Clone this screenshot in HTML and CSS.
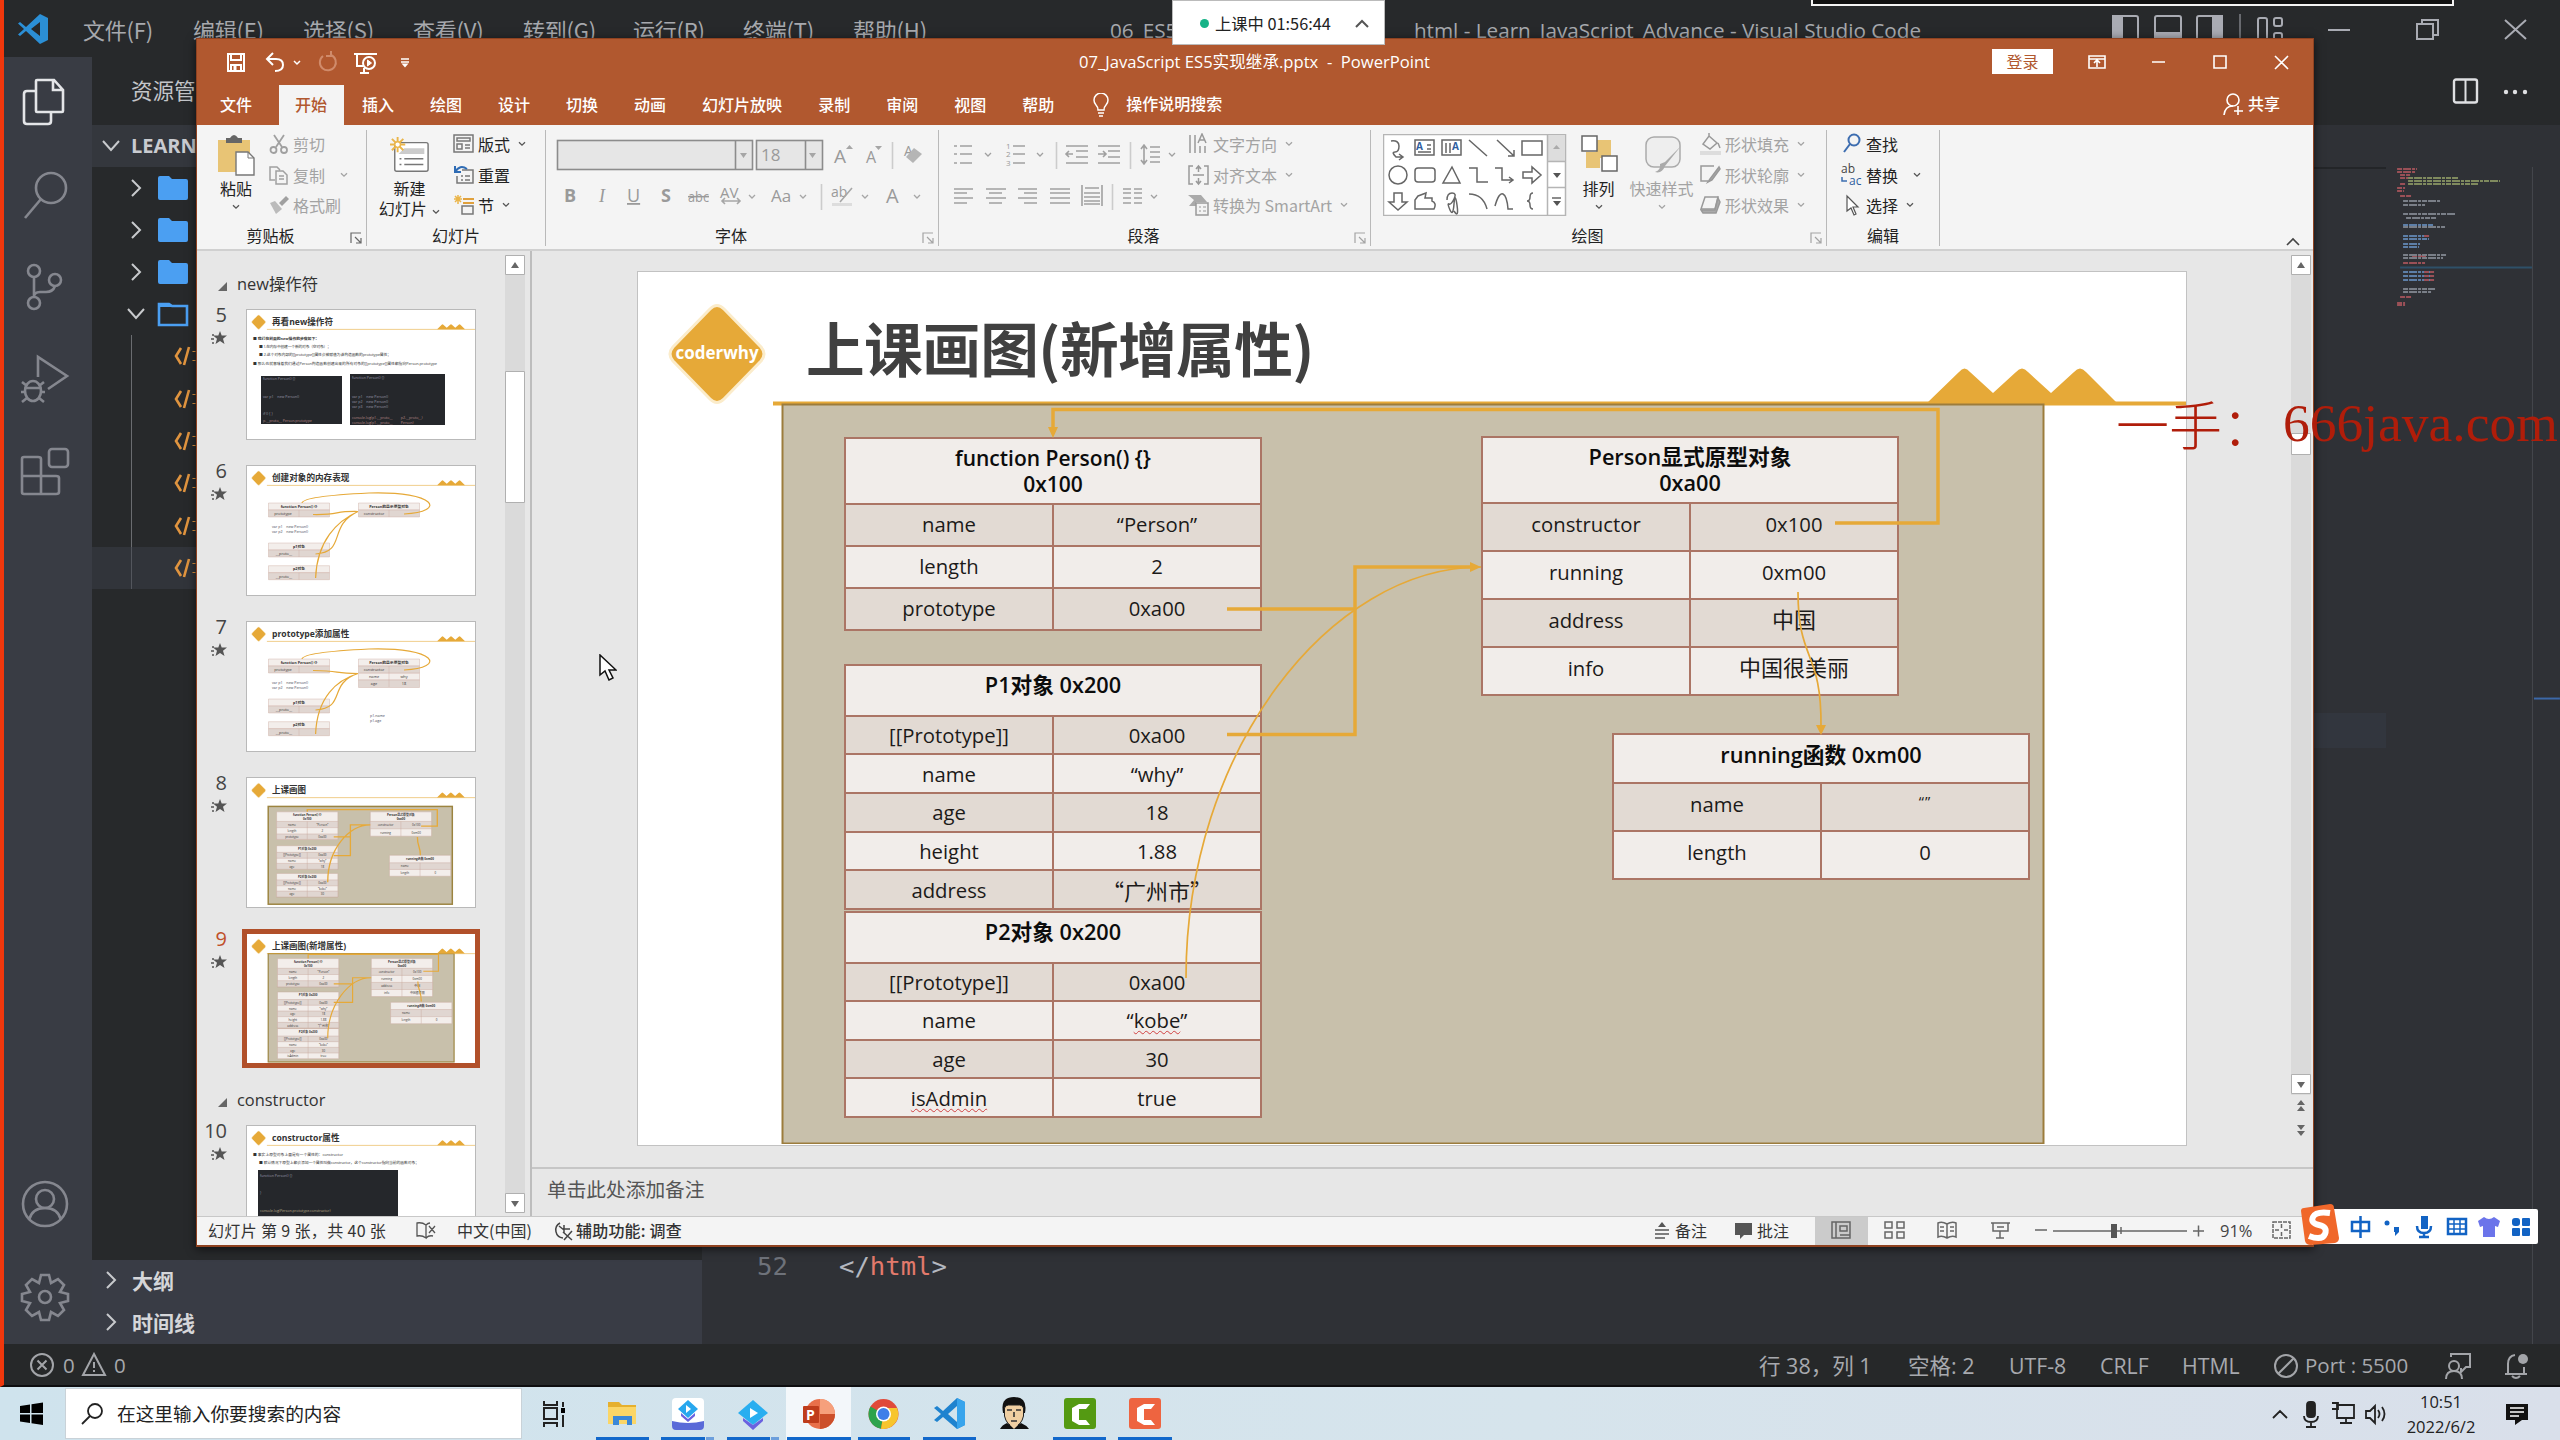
FILE: index.html
```html
<!DOCTYPE html>
<html lang="zh-CN">
<head>
<meta charset="utf-8">
<title>Desktop</title>
<link rel="stylesheet" href="styles.css">
</head>
<body>
<svg class="defs" width="0" height="0">
  <defs>
    <symbol id="chev" viewBox="0 0 8 6"><path d="M1 1.2l3 3 3-3" fill="none" stroke="currentColor" stroke-width="1.3"/></symbol>
    <symbol id="launch" viewBox="0 0 12 12"><path d="M1 11V1h10M5 5l6 6M11 6v5H6" fill="none" stroke="currentColor" stroke-width="1.2"/></symbol>
    <symbol id="code" viewBox="0 0 24 20"><path d="M7 2L2 10l5 8M15 1l-5 18" fill="none" stroke="#e0943f" stroke-width="2.6"/><path d="M20 5v1M20 14v1" stroke="#e0943f" stroke-width="3"/></symbol>
    <symbol id="folder" viewBox="0 0 32 26"><path d="M1 3q0-2 2-2h9l3 3h14q2 0 2 2v17q0 2-2 2H3q-2 0-2-2z" fill="#4b9ff2"/></symbol>
    <symbol id="star" viewBox="0 0 16 14"><path d="M9 0l1.700 4.600H16l-4 3.200 1.500 5.200L9 10l-4.500 3 1.500-5.200-4-3.200h5.300z" fill="#555"/><path d="M1 4h2M0 8h3M1 12h2" stroke="#555" stroke-width="1.300"/></symbol>
    <g id="deco">
      <path d="M773 403.500H2186" stroke="#e6a938" stroke-width="4"/>
      <path d="M1928 402l31-30q5.500-7 11 0l23 21 23-21q6-7 12 0l23 21 23-21q6-7 12 0l31 31z" fill="#e6a938"/>
      <path d="M710 309q7-7 14 0l37 38q6 7 0 14l-37 38q-7 7-14 0l-37-38q-6-7 0-14z" fill="#e6a938" stroke="#fbeccb" stroke-width="3"/>
    </g>
    <g id="links" fill="none" stroke="#e6a938" stroke-width="3.500">
      <path d="M1835 523H1938V409.500H1053V430M1227 609H1355M1227 734.500H1355V567H1474"/>
      <path d="M1186 978C1186 750 1330 567 1481 567" stroke-width="1.700"/>
      <path d="M1798 592C1798 663 1822 650 1821 728" stroke-width="1.700"/>
      <path d="M1053 438l-5-11h10zM1481 567l-11-5v10zM1821 735l-5-10h10z" fill="#e6a938" stroke="none"/>
    </g>
  </defs>
</svg>

<main class="desktop">
<section class="vscode">
  <header class="vs-title">
    <svg class="vs-logo" viewBox="0 0 32 32"><path d="M23 1l8 4v22l-8 4L9 18l-6 5-2-1.500L7 16 1 10.500 3 9l6 5zM23 9l-9 7 9 7z" fill="#2b8fd6" fill-rule="evenodd"/></svg>
    <nav class="vs-menu"><span>文件(F)</span><span>编辑(E)</span><span>选择(S)</span><span>查看(V)</span><span>转到(G)</span><span>运行(R)</span><span>终端(T)</span><span>帮助(H)</span></nav>
    <span class="vs-name-a">06_ES5</span><span class="vs-name-b">html - Learn_JavaScript_Advance - Visual Studio Code</span>
    <svg class="vs-ctl" viewBox="2100 0 460 57" fill="none" stroke="#a9abb3" stroke-width="2">
      <rect x="2113" y="16" width="25" height="26" rx="2"/><path d="M2113 16h9v26h-9z" fill="#a9abb3"/>
      <rect x="2155" y="16" width="26" height="26" rx="2"/><path d="M2155 33h26v9h-26z" fill="#a9abb3"/>
      <rect x="2197" y="16" width="25" height="26" rx="2"/><path d="M2213 16h9v26h-9z" fill="#a9abb3"/>
      <path d="M2240 14v30" stroke-width="1"/>
      <rect x="2258" y="18" width="9" height="24" rx="2"/><rect x="2274" y="18" width="8" height="8" rx="2"/><rect x="2274" y="33" width="8" height="8" rx="2"/>
      <path d="M2328 30h22M2505 20l21 19M2526 20l-21 19"/><path d="M2417 24h16v15h-16zM2422 24v-4h16v15h-5"/>
    </svg>
  </header>
  <div class="vs-body">
    <aside class="activity">
      <svg viewBox="6 57 89 1287" fill="none" stroke="#85878f" stroke-width="2.600">
        <g stroke="#e4e5e8"><path d="M39 80h17l9 10v21q0 1-1 1H39q-1 0-1-1V81q0-1 1-1zM55 80v10h10"/><path d="M38 91h-9q-3 0-3 3v27q0 3 3 3h21q3 0 3-3v-8"/></g>
        <circle cx="53" cy="188" r="15"/><path d="M43 199L27 218"/>
        <circle cx="36" cy="271" r="6"/><circle cx="57" cy="280" r="6"/><circle cx="36" cy="303" r="6"/><path d="M36 277v20M57 286q-2 6-9 6h-6q-6 0-6 5"/>
        <path d="M40 377V357l29 19-19 13"/><ellipse cx="35" cy="391" rx="8" ry="10"/><path d="M27 388h16M24 382l5 4M46 382l-5 4M23 392h5M42 392h5M24 402l5-4M46 402l-5-4"/>
        <path d="M24 459q0-2 2-2h14q3 0 3 2v17h15q3 0 3 2v14q0 2-3 2H26q-2 0-2-2zM24 476h19v18"/><rect x="51" y="449" width="19" height="18" rx="3"/>
        <circle cx="47" cy="1204" r="22"/><circle cx="47" cy="1199" r="9"/><path d="M31 1220q3-12 16-12t16 12"/>
        <circle cx="47" cy="1297" r="6"/><path d="M43 1275h8l2 8 7-4 6 6-4 7 8 2v7l-8 2 4 7-6 6-7-4-2 8h-8l-2-8-7 4-6-6 4-7-8-2v-7l8-2-4-7 6-6 7 4z" />
      </svg>
    </aside>
    <aside class="side">
      <h2>资源管</h2>
      <div class="root"><svg viewBox="0 0 20 12"><path d="M2 1l8 9 8-9"/></svg><b>LEARN</b></div>
      <ul class="tree">
        <li><svg viewBox="0 0 12 20"><path d="M2 2l8 8-8 8"/></svg><svg class="fold"><use href="#folder"/></svg></li>
        <li><svg viewBox="0 0 12 20"><path d="M2 2l8 8-8 8"/></svg><svg class="fold"><use href="#folder"/></svg></li>
        <li><svg viewBox="0 0 12 20"><path d="M2 2l8 8-8 8"/></svg><svg class="fold"><use href="#folder"/></svg></li>
        <li class="open"><svg viewBox="0 0 20 12"><path d="M2 1l8 9 8-9"/></svg><svg class="fold" viewBox="0 0 32 26"><path d="M2 3h10l3 2h15v19H2z" fill="none" stroke="#4b9ff2" stroke-width="2.600"/><path d="M2 3h10l3 3H2z" fill="#4b9ff2"/></svg></li>
      </ul>
      <ul class="files">
        <li><svg><use href="#code"/></svg></li><li><svg><use href="#code"/></svg></li><li><svg><use href="#code"/></svg></li><li><svg><use href="#code"/></svg></li><li><svg><use href="#code"/></svg></li><li class="sel"><svg><use href="#code"/></svg></li>
      </ul>
      <div class="panels">
        <div><svg viewBox="0 0 12 20"><path d="M2 2l8 8-8 8"/></svg><b>大纲</b></div>
        <div><svg viewBox="0 0 12 20"><path d="M2 2l8 8-8 8"/></svg><b>时间线</b></div>
      </div>
    </aside>
    <section class="editor">
      <div class="ed-tabs"><svg viewBox="0 0 80 26"><rect x="2" y="1.500" width="23" height="23" rx="2" fill="none" stroke="#dfe0e3" stroke-width="2.400"/><path d="M13.500 2v22" stroke="#dfe0e3" stroke-width="2"/><g fill="#dfe0e3"><circle cx="54" cy="14" r="2.200"/><circle cx="63" cy="14" r="2.200"/><circle cx="73" cy="14" r="2.200"/></g></svg></div>
      <div class="crumb"></div>
      <div class="ed-body">
        <div class="code-col"><div class="hl"></div><p class="line"><span class="no">52</span><span class="src">&lt;/<i>html</i>&gt;</span></p></div>
        <svg class="minimap" viewBox="2386 166 174 1178">
          <path d="M2532.500 166v1178" stroke="#44474d"/><path d="M2534 698h26" stroke="#3c68a8" stroke-width="2"/><path d="M2400 266.500h132" stroke="#2e5068" stroke-width="2"/>
          <g stroke-width="2" fill="none" stroke-dasharray="5 1 8 1 3 1">
            <path stroke="#9a5057" d="M2397 168h20M2397 171h18M2400 174h10M2400 177h8M2400 183h6M2397 187h8M2397 190h7M2400 195h11M2412 255h14M2400 296h11M2397 302h8M2397 304h8"/>
            <path stroke="#7f8a5e" d="M2408 177h50M2408 180h92M2408 183h70"/>
            <path stroke="#7a7f88" d="M2403 200h38M2403 204h22M2403 213h52M2406 217h30M2403 226h42M2403 254h44M2403 257h40M2403 288h32M2403 291h28"/>
            <path stroke="#5d7fa8" d="M2403 224h30M2403 235h26M2403 238h26M2403 243h17M2403 246h16M2403 271h31M2403 275h31M2403 279h31"/>
            <path stroke="#9a5057" d="M2424 235h6M2424 271h10M2424 275h10M2424 279h10M2403 262h22"/>
          </g>
        </svg>
      </div>
    </section>
  </div>
  <footer class="vs-status">
    <svg class="probs" viewBox="27 1345 80 40" fill="none" stroke="#a3a5a9" stroke-width="2"><circle cx="42" cy="1365" r="11"/><path d="M37.500 1360.500l9 9M46.500 1360.500l-9 9"/></svg><span class="n1">0</span>
    <svg class="warn" viewBox="0 0 26 26" fill="none" stroke="#a3a5a9" stroke-width="2"><path d="M13 2l11 21H2zM13 10v6M13 18v2"/></svg><span class="n2">0</span>
    <span class="s-pos">行 38，列 1</span><span class="s-sp">空格: 2</span><span class="s-utf">UTF-8</span><span class="s-crlf">CRLF</span><span class="s-html">HTML</span>
    <svg class="ban" viewBox="0 0 26 26" fill="none" stroke="#a3a5a9" stroke-width="2"><circle cx="13" cy="13" r="11"/><path d="M5 21L21 5"/></svg><span class="s-port">Port : 5500</span>
    <svg class="fb" viewBox="2445 1350 90 32" fill="none" stroke="#a3a5a9" stroke-width="2"><circle cx="2456" cy="1366" r="5"/><path d="M2448 1379q0-8 8-8t8 8M2453 1357v-3h19v13h-4l-5 5v-4"/><path d="M2507 1374h22M2510 1373v-9q0-8 7-9M2526 1373v-6M2514 1376q4 4 8 0"/><circle cx="2525" cy="1359" r="5" fill="#a3a5a9" stroke="none"/></svg>
  </footer>
</section>

<section class="ppt">
  <header class="p-title">
    <svg class="qat" viewBox="220 48 200 30" fill="none" stroke="#fff" stroke-width="2">
      <path d="M228 54h16v17h-16zM231 54v6h10v-6M231 71v-6h10v6"/><path d="M235 66v5" stroke-width="3"/>
      <path d="M273 53l-6 6 6 6M267 59h9q7 0 7 6t-8 6"/><path d="M294 61l3 3 3-3" stroke-width="1.500"/>
      <path d="M331 55a8 8 0 1 1-8 1M331 51v5h-5" stroke="#d08b6b"/>
      <path d="M354 54h23M357 54v12h6M364 68v4M360 73h9"/><circle cx="369" cy="63" r="6"/><path d="M367.500 60l4 3-4 3z" fill="#fff" stroke-width="1"/>
      <path d="M401 59h8M401 62h8" stroke-width="1.500"/><path d="M401.500 63.500h7l-3.500 4z" fill="#fff" stroke="none"/>
    </svg>
    <span class="p-name">07_JavaScript ES5实现继承.pptx&nbsp; -&nbsp; PowerPoint</span>
    <span class="login">登录</span>
    <svg class="p-ctl" viewBox="2080 40 220 40" fill="none" stroke="#fff" stroke-width="1.600"><path d="M2089 54h16v12h-16zM2089 57h16M2097 65v-6M2094 61l3-3 3 3M2152 60h13M2214 54h12v12h-12zM2275 54l13 13M2288 54l-13 13"/></svg>
  </header>
  <nav class="p-tabs">
    <span class="file">文件</span><span class="on">开始</span><span>插入</span><span>绘图</span><span>设计</span><span>切换</span><span>动画</span><span>幻灯片放映</span><span>录制</span><span>审阅</span><span>视图</span><span>帮助</span>
    <svg class="bulb" viewBox="0 0 18 24" fill="none" stroke="#fff" stroke-width="1.500"><path d="M6 17q0-3-2-5a7 7 0 1 1 10 0q-2 2-2 5zM6 20h6M7 23h4"/></svg><em>操作说明搜索</em>
    <svg class="person" viewBox="0 0 22 24" fill="none" stroke="#fff" stroke-width="1.600"><circle cx="10" cy="7" r="6"/><path d="M1 22q1-9 9-9M15 13v9M11 18h9"/></svg><em>共享</em>
  </nav>
  <div class="ribbon">
    <div class="grp g-clip">
      <div class="body">
        <div class="big"><svg viewBox="0 0 40 42"><path d="M2 6h32v32H2z" fill="#e8c475"/><path d="M10 9V4h4q4-6 8 0h4v5z" fill="#666"/><path d="M20 18h12l6 6v17H20z" fill="#fff" stroke="#777" stroke-width="1.400"/><path d="M32 18v6h6" fill="none" stroke="#777"/></svg><span>粘贴</span><svg class="cv"><use href="#chev"/></svg></div>
        <div class="col dim">
          <p><svg viewBox="0 0 22 22" fill="none" stroke="#a0a0a0" stroke-width="1.800"><path d="M6 2l8 12M16 2L8 14"/><circle cx="5.500" cy="17" r="3"/><circle cx="16" cy="17" r="3"/></svg>剪切</p>
          <p><svg viewBox="0 0 22 22" fill="none" stroke="#a0a0a0" stroke-width="1.500"><path d="M7 16H2V3h7l3 3M8 7h7l4 4v9H8zM11 12h5M11 15h5"/></svg>复制<svg class="cv far"><use href="#chev"/></svg></p>
          <p><svg viewBox="0 0 22 22"><path d="M18 2l3 3-7 7-3-3z" fill="#a0a0a0"/><path d="M2 9l5-2 7 8-6 5z" fill="#bbb"/></svg>格式刷</p>
        </div>
      </div>
      <footer class="wl">剪贴板<svg class="la"><use href="#launch"/></svg></footer>
    </div>
    <div class="grp g-slide">
      <div class="body">
        <div class="big"><svg viewBox="0 0 42 38" fill="none" stroke="#777" stroke-width="1.500"><rect x="5" y="6" width="35" height="30" rx="2" fill="#fff"/><path d="M15 12h21v6H9" stroke="none" fill="#ccc"/><path d="M10 23h2M15 23h20M10 29h2M15 29h20"/><path d="M8 0v16M0 8h16M2 2l12 12M14 2L2 14" stroke="#eab54a" stroke-width="2"/><circle cx="8" cy="8" r="3" fill="#fff" stroke="#eab54a"/></svg><span>新建<br>幻灯片 <svg class="cv"><use href="#chev"/></svg></span></div>
        <div class="col">
          <p><svg viewBox="0 0 22 22" fill="none" stroke="#777" stroke-width="1.500"><path d="M1 2h19v17H1zM4 5h13v3H4zM4 11h5v5H4zM12 12h5M12 15h5"/></svg>版式<svg class="cv"><use href="#chev"/></svg></p>
          <p><svg viewBox="0 0 22 22" fill="none" stroke="#777" stroke-width="1.500"><path d="M9 6h11v13H4v-7M8 12h2M12 12h5M8 16h2M12 16h5"/><path d="M2 2v6h6M2 8q5-8 12-3" stroke="#2f6cb5" stroke-width="2"/></svg>重置</p>
          <p><svg viewBox="0 0 22 22" fill="none" stroke="#777" stroke-width="1.500"><path d="M9 12h11v8H9z"/><path d="M10 5h11M10 9h11" stroke="#e0a03c" stroke-width="2"/><path d="M5 1v9M1 5h8M2 2l6 6M8 2L2 8" stroke="#eab54a"/></svg>节<svg class="cv"><use href="#chev"/></svg></p>
        </div>
      </div>
      <footer>幻灯片</footer>
    </div>
    <div class="grp g-font">
      <svg class="tools" viewBox="546 126 392 94" fill="none" stroke="#a6a6a6" stroke-width="1.600">
        <rect x="557.500" y="140.500" width="195" height="29" fill="#e6e6e6" stroke="#8c8c8c"/><path d="M735.500 140v30" stroke="#8c8c8c"/><rect x="756.500" y="140.500" width="66" height="29" fill="#e6e6e6" stroke="#8c8c8c"/><path d="M805.500 140v30" stroke="#8c8c8c"/>
        <path d="M740 153h7l-3.500 5zM809 153h7l-3.500 5zM846 149l3.500-4 3.500 4zM875 146h7l-3.500 4z" fill="#a6a6a6" stroke="none"/>
        <path d="M892.500 142v27M821.500 184v26" stroke="#ccc"/>
        <g fill="#9a9a9a" stroke="none" font-size="17"><text x="761" y="161">18</text><text x="834" y="163" font-size="19">A</text><text x="866" y="163" font-size="16">A</text><text x="904" y="156" font-size="14">A</text>
        <g font-size="18"><text x="564" y="202" font-weight="700">B</text><text x="599" y="202" font-style="italic" style="font-family:'Liberation Serif',serif">I</text><text x="627" y="202" text-decoration="underline">U</text><text x="661" y="202" font-weight="700">S</text><text x="688" y="202" font-size="15" text-decoration="line-through" textLength="21" lengthAdjust="spacingAndGlyphs">abc</text><text x="720" y="198" font-size="15">AV</text><text x="771" y="202" font-size="17">Aa</text><text x="831" y="197" font-size="14">ab</text><text x="886" y="203" font-size="20">A</text></g></g>
        <path d="M722 201h18M725 198l-3 3 3 3M737 198l3 3-3 3M840 202l12-14"/><path d="M832 203h20v3h-20z" fill="#ddd" stroke="none"/><path d="M914 148l8 6-9 9-7-6z" fill="#b5b5b5" stroke="none"/>
        <path d="M749 195l3 3 3-3M800 195l3 3 3-3M862 195l3 3 3-3M914 195l3 3 3-3" stroke-width="1.300"/>
      </svg>
      <footer class="wl">字体<svg class="la dim"><use href="#launch"/></svg></footer>
    </div>
    <div class="grp g-para">
      <div class="body">
      <svg class="tools" viewBox="939 126 245 94" fill="none" stroke="#a0a0a0" stroke-width="1.600">
        <path d="M954 146h3M960 146h12M954 154h3M960 154h12M954 163h3M960 163h12M1013 146h12M1013 154h12M1013 163h12"/>
        <g fill="#9a9a9a" stroke="none" font-size="8"><text x="1006" y="149">1</text><text x="1006" y="157">2</text><text x="1006" y="166">3</text></g>
        <path d="M1056.500 142v27M1130.500 142v27M1112.500 184v26" stroke="#ccc"/>
        <path d="M1066 146h22M1076 151h12M1076 157h12M1066 163h22M1073 154h-7M1069 151l-3 3 3 3M1098 146h22M1108 151h12M1108 157h12M1098 163h22M1098 154h8M1103 151l3 3-3 3M1144 146v17M1141 149l3-4 3 4M1141 160l3 4 3-4M1150 147h10M1150 152h10M1150 157h10M1150 162h10"/>
        <path d="M954 189h19M954 193h13M954 198h19M954 203h13M986 189h20M989 193h13M986 198h20M989 203h13M1018 189h19M1024 193h13M1018 198h19M1024 203h13M1050 189h20M1050 193h20M1050 198h20M1050 203h20M1084 193h16M1084 197h16M1084 201h16M1084 204h16M1082 185v21M1102 185v21M1085 188h14M1123 189h8M1134 189h8M1123 193h8M1134 193h8M1123 198h8M1134 198h8M1123 203h8M1134 203h8"/>
        <path d="M985 153l3 3 3-3M1037 153l3 3 3-3M1169 153l3 3 3-3M1151 195l3 3 3-3" stroke-width="1.300"/>
      </svg>
      <div class="col dim">
        <p><svg viewBox="0 0 22 22" fill="none" stroke="#999" stroke-width="1.500"><path d="M2 2v18M7 2v18M12 13v7M17 13v7M10 10l4-9 4 9M11 7h6"/></svg>文字方向<svg class="cv"><use href="#chev"/></svg></p>
        <p><svg viewBox="0 0 22 22" fill="none" stroke="#999" stroke-width="1.500"><path d="M5 2H1v18h4M16 2h4v18h-4M10.500 2v6M8 5l2.500-3L13 5M10.500 20v-6M8 17l2.500 3 2.500-3M5 11h11"/></svg>对齐文本<svg class="cv"><use href="#chev"/></svg></p>
        <p><svg viewBox="0 0 22 22"><path d="M0 1h13l6 7H8v4H1l5-6z" fill="#aaa"/><path d="M8 9h12v12H8z" fill="#f3f3f3" stroke="#999" stroke-width="1.500"/><path d="M11 13h2M15 13h3M11 17h2M15 17h3" stroke="#999"/></svg>转换为 SmartArt<svg class="cv"><use href="#chev"/></svg></p>
      </div>
      </div>
      <footer class="wl">段落<svg class="la dim"><use href="#launch"/></svg></footer>
    </div>
    <div class="grp g-draw">
      <div class="body">
      <svg class="gal" viewBox="1383 134 184 82" fill="none" stroke="#666" stroke-width="1.500">
        <rect x="1383.500" y="134.500" width="182" height="81" fill="#fff" stroke="#b5b5b5"/><path d="M1548 135h17v26h-17z" fill="#ddd" stroke="none"/><path d="M1547.500 135v80M1548 161.500h18M1548 187.500h18" stroke="#b5b5b5"/>
        <path d="M1553 149l3.500-4 3.500 4z" fill="#aaa" stroke="none"/><path d="M1553 173h8l-4 5zM1553 201h8l-4 5z" fill="#555" stroke="none"/><path d="M1552 198h9"/>
        <path d="M1391 141q8-1 8 5t-4 6 1 5h6M1399 154l4 3-4 3"/><path d="M1415 140h19v15h-19zM1442 140h19v15h-19zM1427 145h4M1427 149h4M1418 152h13M1446 143v10M1450 143v10"/><text x="1416" y="150" font-size="10" fill="#2f5f9f" stroke="none" font-weight="700">A</text><text x="1452" y="150" font-size="10" fill="#2f5f9f" stroke="none" font-weight="700">A</text>
        <path d="M1469 140l18 16M1497 140l17 16M1514 150v6h-6M1522 141h20v14h-20z"/><circle cx="1398" cy="175" r="9"/><rect x="1415" y="168" width="20" height="14" rx="3"/><path d="M1452 167l8 16h-17zM1469 168h8v14h11M1495 168h7v12h10M1509 177l4 3-4 3M1523 172h9v-5l9 8-9 8v-5h-9z"/>
        <path d="M1394 193h8v9h5l-9 8-9-8h5zM1418 196l8-3-1 5h7v3q5 2 2 8h-19v-9zM1447 200q0-7 5-7t2 6-5 5 1 6 4-6 3 1-3 6M1469 194q14 0 18 15M1495 206q4-14 8-12t5 15h5M1533 193q-3 0-3 4t-3 4q3 0 3 4t3 4"/>
      </svg>
      <div class="big"><svg viewBox="0 0 40 42"><path d="M16 6h15v18H16z" fill="#e8c475"/><path d="M6 18h14v16H6z" fill="#e8c475"/><path d="M2 2h15v15H2zM22 22h15v15H22z" fill="#fff" stroke="#666" stroke-width="1.500"/></svg><span>排列</span><svg class="cv"><use href="#chev"/></svg></div>
      <div class="big dim q"><svg viewBox="0 0 40 42"><rect x="3" y="3" width="34" height="30" rx="8" fill="#eee" stroke="#aaa" stroke-width="1.500"/><path d="M38 12L22 32q-3 8-10 6 6-2 5-8l5-2z" fill="#aaa"/></svg><span>快速样式</span><svg class="cv"><use href="#chev"/></svg></div>
      <div class="col dim">
        <p><svg viewBox="0 0 22 22" fill="none" stroke="#999" stroke-width="1.500"><path d="M9 3l8 7-7 6-7-5zM9 3V0M18 10l2 5"/><path d="M0 18h21v4H0z" fill="#ddd" stroke="none"/></svg>形状填充<svg class="cv"><use href="#chev"/></svg></p>
        <p><svg viewBox="0 0 22 22" fill="none" stroke="#999" stroke-width="1.500"><path d="M14 2H1v15h7"/><path d="M19 3l-9 12-2 3 4-2 8-11z" fill="#aaa"/></svg>形状轮廓<svg class="cv"><use href="#chev"/></svg></p>
        <p><svg viewBox="0 0 22 22" fill="none" stroke="#999" stroke-width="1.500"><path d="M5 3h13l-3 12H1z"/><path d="M18 4l2 4-4 11H3l-2-3h14z" fill="#aaa"/></svg>形状效果<svg class="cv"><use href="#chev"/></svg></p>
      </div>
      </div>
      <footer class="wl">绘图<svg class="la dim"><use href="#launch"/></svg></footer>
    </div>
    <div class="grp g-edit">
      <div class="body"><div class="col">
        <p><svg viewBox="0 0 22 22" fill="none" stroke="#3d6db0" stroke-width="2"><circle cx="13" cy="7" r="5.500"/><path d="M9 11l-6 8"/></svg>查找</p>
        <p><svg class="rep" viewBox="0 0 22 26"><text x="0" y="11" font-size="12" fill="#444">ab</text><text x="8" y="23" font-size="12" fill="#2f5f9f">ac</text><path d="M1 15v4h5" fill="none" stroke="#3d6db0" stroke-width="1.500"/></svg>替换<svg class="cv mid"><use href="#chev"/></svg></p>
        <p><svg viewBox="0 0 22 22"><path d="M6 2v15l4-3 3 7 2-1-3-7h5z" fill="#fff" stroke="#555" stroke-width="1.200"/></svg>选择<svg class="cv"><use href="#chev"/></svg></p>
      </div></div>
      <footer>编辑</footer>
    </div>
    <svg class="collapse" viewBox="0 0 16 10"><path d="M2 8l6-6 6 6" fill="none" stroke="#444" stroke-width="1.600"/></svg>
  </div>

  <div class="p-main">
    <aside class="nav">
      <div class="list">
      <h3><i></i>new操作符</h3>
      <div class="th"><div class="num">5<svg><use href="#star"/></svg></div>
        <svg class="pic" viewBox="0 0 228 129"><g transform="scale(.1474) translate(-638 -272)"><use href="#deco"/></g><text class="tt" x="25" y="14.500">再看new操作符</text>
          <g class="tx"><text x="6" y="30" font-weight="700" textLength="66">■ 我们在前面的new操作的步骤如下：</text><text x="12" y="38" textLength="72">■ 1.在内存中创建一个新的对象（空对象）；</text><text x="12" y="46" textLength="132">■ 2.这个对象内部的[[prototype]]属性会被赋值为该构造函数的prototype属性；</text><text x="6" y="55" textLength="184" lengthAdjust="spacingAndGlyphs">■ 那么也就意味着我们通过Person构造函数创建出来的所有对象的[[prototype]]属性都指向Person.prototype</text></g>
          <path d="M14 66h81v48H14zM103 64h95v51h-95z" fill="#25272b"/>
          <g class="mono"><text x="16" y="70">function Person() {}</text><text x="16" y="88">var p1 = new Person()</text><text x="16" y="105">if () { }</text><text x="16" y="112" fill="#b88">p.__proto__  Person.prototype</text><text x="105" y="69">function Person() {}</text><text x="105" y="88">var p1 = new Person()</text><text x="105" y="93">var p2 = new Person()</text><text x="105" y="98">var p3 = new Person()</text><text x="105" y="109" fill="#b88">console.log(p1.__proto__ === p2.__proto__)</text><text x="105" y="114" fill="#b88">console.log(p1.__proto__ === Person)</text></g>
        </svg></div>
      <div class="th"><div class="num">6<svg><use href="#star"/></svg></div>
        <svg class="pic" viewBox="0 0 228 129"><g transform="scale(.1474) translate(-638 -272)"><use href="#deco"/></g><text class="tt" x="25" y="14.500">创建对象的内存表现</text>
          <g class="mini"><path class="h" d="M21.500 37h61v7h-61zM111.500 37h61v7h-61zM21.500 77h61v7h-61zM21.500 99.700h61v7h-61z"/><path class="r" d="M21.500 44h61v7h-61zM111.500 44h61v7h-61zM21.500 84h61v7h-61zM21.500 106.700h61v7h-61zM52 44v7M142 44v7M52 84v7M52 106.700v7"/></g>
          <g class="tx mc"><text x="52" y="42" font-weight="700">function Person() {}</text><text x="142" y="42" font-weight="700">Person的显示原型对象</text><text x="36" y="49">prototype</text><text x="127" y="49">constructor</text><text x="52" y="82" font-weight="700">p1对象</text><text x="52" y="104" font-weight="700">p2对象</text><text x="37" y="89">__proto__</text><text x="37" y="112">__proto__</text></g>
          <g class="mono dk"><text x="25" y="62">var p1 = new Person()</text><text x="25" y="67">var p2 = new Person()</text></g>
          <path class="arc" d="M157 48C200 46 190 25 122 27C80 29 56 32 55 37M66 48.500C95 49 85 45 111 45.500M68.500 88C100 86 80 60 111 45.500M68.600 112C70 75 90 55 111 45.500"/>
        </svg></div>
      <div class="th"><div class="num">7<svg><use href="#star"/></svg></div>
        <svg class="pic" viewBox="0 0 228 129"><g transform="scale(.1474) translate(-638 -272)"><use href="#deco"/></g><text class="tt" x="25" y="14.500">prototype添加属性</text>
          <g class="mini"><path class="h" d="M21.500 37h61v7h-61zM111.500 37h61v7h-61zM21.500 77h61v7h-61zM21.500 99.700h61v7h-61zM111.500 51h61v7h-61z"/><path class="r" d="M21.500 44h61v7h-61zM111.500 44h61v7h-61zM111.500 58h61v7.500h-61zM21.500 84h61v7h-61zM21.500 106.700h61v7h-61zM52 44v7M142 44v21M52 84v7M52 106.700v7"/></g>
          <g class="tx mc"><text x="52" y="42" font-weight="700">function Person() {}</text><text x="142" y="42" font-weight="700">Person的显示原型对象</text><text x="36" y="49">prototype</text><text x="127" y="49">constructor</text><text x="127" y="56">name</text><text x="157" y="56">why</text><text x="127" y="63">age</text><text x="157" y="63">18</text><text x="52" y="82" font-weight="700">p1对象</text><text x="52" y="104" font-weight="700">p2对象</text><text x="37" y="89">__proto__</text><text x="37" y="112">__proto__</text></g>
          <g class="mono dk"><text x="25" y="62">var p1 = new Person()</text><text x="25" y="67">var p2 = new Person()</text><text x="123" y="95">p1.name</text><text x="123" y="100">p1.age</text></g>
          <path class="arc" d="M157 48C200 46 190 25 122 27C80 29 56 32 55 37M66 48.500C95 49 85 51 111 51.500M68.500 88C100 86 80 62 111 51.500M68.600 112C70 75 90 58 111 51.500"/>
        </svg></div>
      <div class="th"><div class="num">8<svg><use href="#star"/></svg></div>
        <svg class="pic" viewBox="638 272 1548 872"><use href="#deco"/><text class="tb" x="808" y="370">上课画图</text>
          <rect x="782" y="463" width="1250" height="664" fill="#c8c0ab" stroke="#9c8440" stroke-width="10"/>
          <g class="mt"><path class="h" d="M839 500h416v187H839zM839 730h416v160H839zM839 918h416v160H839zM1475 500h416v165h-416zM1605 795h416v142h-416z"/><path class="r" d="M839 565h416v42H839zM839 650h416v37H839zM839 775h416v40H839zM839 850h416v40H839zM839 962h416v40H839zM839 1038h416v40H839zM1475 565h416v50h-416zM1605 846h416v45h-416zM1047 565v122M1047 775v115M1047 962v116M1683 565v100M1813 846v91"/>
          <text x="1047" y="527" class="b">function Person() {}</text><text x="1047" y="553" class="b">0x100</text><text x="943" y="594">name</text><text x="1150" y="594">“Person”</text><text x="943" y="636">length</text><text x="1150" y="636">2</text><text x="943" y="676">prototype</text><text x="1150" y="676">0xa00</text><text x="1047" y="760" class="b">P1对象 0x200</text><text x="943" y="802">[[Prototype]]</text><text x="1150" y="802">0xa00</text><text x="943" y="840">name</text><text x="1150" y="840">“why”</text><text x="943" y="878">age</text><text x="1150" y="878">18</text><text x="1047" y="948" class="b">P2对象 0x200</text><text x="943" y="990">[[Prototype]]</text><text x="1150" y="990">0xa00</text><text x="943" y="1028">name</text><text x="1150" y="1028">“kobe”</text><text x="943" y="1066">age</text><text x="1150" y="1066">30</text><text x="1683" y="527" class="b">Person显式原型对象</text><text x="1683" y="553" class="b">0xa00</text><text x="1579" y="597">constructor</text><text x="1787" y="597">0x100</text><text x="1579" y="648">running</text><text x="1787" y="648">0xm00</text><text x="1813" y="828" class="b">running函数 0xm00</text><text x="1709" y="875">name</text><text x="1709" y="920">length</text><text x="1917" y="920">0</text></g>
          <path d="M1820 597H1930V485H1047V500M1227 670H1340M1227 797H1340V588H1475M1186 978C1186 750 1330 590 1475 588M1795 670C1795 740 1815 730 1815 795" fill="none" stroke="#e6a938" stroke-width="9"/>
        </svg></div>
      <div class="th cur"><div class="num">9<svg><use href="#star"/></svg></div>
        <svg class="pic" viewBox="638 272 1548 872"><rect x="782" y="403" width="1262" height="736" fill="#c8c0ab" stroke="#9c8440" stroke-width="8"/><use href="#deco"/><text class="tb" x="808" y="370">上课画图(新增属性)</text>
          <g class="mt"><path class="h" d="M845 437h416v192H845zM845 664h416v244H845zM845 912h416v205H845zM1482 437h416v258h-416zM1613 734h416v145h-416z"/><path class="r" d="M845 503h416v42H845zM845 587h416v42H845zM845 715h416v39H845zM845 793h416v38H845zM845 870h416v38H845zM845 963h416v38H845zM845 1040h416v38H845zM1482 503h416v48h-416zM1482 599h416v48h-416zM1613 783h416v48h-416zM1053 503v126M1053 715v193M1053 963v154M1690 503v192M1821 783v96"/>
          <text x="1053" y="465" class="b">function Person() {}</text><text x="1053" y="493" class="b">0x100</text><text x="949" y="532">name</text><text x="1157" y="532">“Person”</text><text x="949" y="574">length</text><text x="1157" y="574">2</text><text x="949" y="616">prototype</text><text x="1157" y="616">0xa00</text><text x="1053" y="694" class="b">P1对象 0x200</text><text x="949" y="744">[[Prototype]]</text><text x="1157" y="744">0xa00</text><text x="949" y="783">name</text><text x="1157" y="783">“why”</text><text x="949" y="821">age</text><text x="1157" y="821">18</text><text x="949" y="860">height</text><text x="1157" y="860">1.88</text><text x="949" y="899">address</text><text x="1157" y="899">“广州市”</text><text x="1053" y="940" class="b">P2对象 0x200</text><text x="949" y="990">[[Prototype]]</text><text x="1157" y="990">0xa00</text><text x="949" y="1029">name</text><text x="1157" y="1029">“kobe”</text><text x="949" y="1068">age</text><text x="1157" y="1068">30</text><text x="949" y="1106">isAdmin</text><text x="1157" y="1106">true</text><text x="1690" y="465" class="b">Person显式原型对象</text><text x="1690" y="493" class="b">0xa00</text><text x="1586" y="533">constructor</text><text x="1794" y="533">0x100</text><text x="1586" y="581">running</text><text x="1794" y="581">0xm00</text><text x="1586" y="629">address</text><text x="1794" y="629">中国</text><text x="1586" y="677">info</text><text x="1794" y="677">中国很美丽</text><text x="1821" y="763" class="b">running函数 0xm00</text><text x="1717" y="812">name</text><text x="1717" y="860">length</text><text x="1925" y="860">0</text></g>
          <path d="M1835 523H1938V409H1053V437M1227 609H1355M1227 734H1355V567H1481M1186 978C1186 750 1330 567 1481 567M1798 592C1798 663 1822 650 1821 728" fill="none" stroke="#e6a938" stroke-width="8"/>
        </svg></div>
      <h3><i></i>constructor</h3>
      <div class="th"><div class="num">10<svg><use href="#star"/></svg></div>
        <svg class="pic" viewBox="0 0 228 129"><g transform="scale(.1474) translate(-638 -272)"><use href="#deco"/></g><text class="tt" x="25" y="14.500">constructor属性</text>
          <g class="tx"><text x="6" y="30" textLength="90">■ 事实上原型对象上面是有一个属性的：constructor</text><text x="12" y="38" textLength="160">■ 默认情况下原型上都会添加一个属性叫做constructor，这个constructor指向当前的函数对象；</text></g>
          <path d="M11 44h140v65H11z" fill="#25272b"/><g class="mono"><text x="13" y="51">function Person() {}</text><text x="13" y="68">}</text><text x="13" y="86" fill="#ba8">console.log(Person.prototype.constructor)</text><text x="13" y="95" fill="#b77">console.log(p1.__proto__.constructor)</text><text x="13" y="104" fill="#b77">console.log(p1.__proto__.constructor.name)</text></g>
        </svg></div>
      </div>
      <svg class="bar" viewBox="505 251 20 965"><path d="M505 255h20v957h-20z" fill="#dadada"/><path d="M505.500 255.500h19v19h-19zM505.500 371.500h19v131h-19zM505.500 1193.500h19v19h-19z" fill="#fff" stroke="#b0b0b0"/><path d="M511 268h8l-4-6zM511 1201h8l-4 6z" fill="#666"/></svg>
    </aside>
    <section class="stage">
      <div class="canvas">
        <div class="slide">
          <svg class="art" viewBox="638 272 1548 872"><rect x="782.500" y="403.500" width="1261" height="741" fill="#c8c0ab"/><use href="#deco"/><rect x="782.500" y="404.500" width="1261" height="739" fill="#c8c0ab" stroke="#9c7c3c" stroke-width="2"/></svg>
          <b class="brand">coderwhy</b>
          <h1>上课画图(新增属性)</h1>
          <table class="t t1"><tr><th colspan="2">function Person() {}<br>0x100</th></tr><tr><td>name</td><td>“Person”</td></tr><tr><td>length</td><td>2</td></tr><tr><td>prototype</td><td>0xa00</td></tr></table>
          <table class="t t2"><tr><th colspan="2">P1对象 0x200</th></tr><tr><td>[[Prototype]]</td><td>0xa00</td></tr><tr><td>name</td><td>“why”</td></tr><tr><td>age</td><td>18</td></tr><tr><td>height</td><td>1.88</td></tr><tr><td>address</td><td class="cj">“广州市”</td></tr></table>
          <table class="t t3"><tr><th colspan="2">P2对象 0x200</th></tr><tr><td>[[Prototype]]</td><td>0xa00</td></tr><tr><td>name</td><td>“<u>kobe</u>”</td></tr><tr><td>age</td><td>30</td></tr><tr><td><u>isAdmin</u></td><td>true</td></tr></table>
          <table class="t t4"><tr><th colspan="2">Person显式原型对象<br>0xa00</th></tr><tr><td>constructor</td><td>0x100</td></tr><tr><td>running</td><td>0xm00</td></tr><tr><td>address</td><td class="cj">中国</td></tr><tr><td>info</td><td class="cj">中国很美丽</td></tr></table>
          <table class="t t5"><tr><th colspan="2">running函数 0xm00</th></tr><tr><td>name</td><td class="q">“”</td></tr><tr><td>length</td><td>0</td></tr></table>
          <svg class="art" viewBox="638 272 1548 872"><use href="#links"/></svg>
        </div>
        <svg class="bar" viewBox="2291 251 20 917"><path d="M2291 255h20v840h-20z" fill="#dadada"/><path d="M2291.500 255.500h19v19h-19zM2291.500 433.500h19v21h-19zM2291.500 1074.500h19v19h-19z" fill="#fff" stroke="#b0b0b0"/><path d="M2297 268h8l-4-6zM2297 1082h8l-4 6zM2297 1105h8l-4-5zM2297 1111h8l-4-5zM2297 1125h8l-4 5zM2297 1131h8l-4 5z" fill="#666"/></svg>
      </div>
      <div class="notes">单击此处添加备注</div>
    </section>
  </div>
  <footer class="p-status">
    <span class="a">幻灯片 第 9 张，共 40 张</span>
    <svg class="book" viewBox="0 0 20 18" fill="none" stroke="#555" stroke-width="1.300"><path d="M10 3Q6 0 1 1v13q5-1 9 2V3q2-2 4-2M10 16q3-3 7-2M13 4l6 7M19 4l-6 7"/></svg>
    <span class="b">中文(中国)</span>
    <svg class="acc" viewBox="0 0 22 20" fill="none" stroke="#444" stroke-width="1.500"><path d="M8 2a8 8 0 0 0 3 15M7 5l5 4v4M11 11l9 8M20 10l-8 9M12 4v4h6"/></svg>
    <span class="c">辅助功能: 调查</span>
    <svg class="ni" viewBox="0 0 16 18" fill="none" stroke="#555" stroke-width="1.600"><path d="M1 8h14M1 12h14M1 16h10"/><path d="M4 5h8L8 0z" fill="#555" stroke="none"/></svg><span>备注</span>
    <svg class="ci" viewBox="0 0 19 18"><path d="M1 1h17v12h-8l-4 4v-4H1z" fill="#555"/></svg><span>批注</span>
    <svg class="views" viewBox="1815 1217 480 28" fill="none" stroke="#666" stroke-width="1.500">
      <path d="M1815 1217h53v28h-53z" fill="#cbcbcb" stroke="none"/><path d="M1832 1222h18v16h-18zM1836 1222v16M1840 1226h7v5h-7zM1840 1235h10"/>
      <path d="M1885 1222h7v6h-7zM1897 1222h7v6h-7zM1885 1232h7v6h-7zM1897 1232h7v6h-7z"/><path d="M1947 1224q-5-3-9-1v14q4-2 9 1 5-3 9-1v-14q-4-2-9 1v14M1940 1227h4M1940 1231h4M1950 1227h4M1950 1231h4"/><path d="M1991 1223h19M1993 1223v8h15v-8M2000 1231v7M1996 1238h8M1997 1227h7"/>
      <path d="M2035 1230h12M2053 1231h134M2193 1231h11M2198.500 1225.500v11M2121 1227v7"/><path d="M2111 1224h6v14h-6z" fill="#555" stroke="none"/>
      <text x="2220" y="1236.500" font-size="16.500" fill="#444" stroke="none">91%</text><path d="M2273 1222h17v16h-17zM2281.500 1224v4M2281.500 1232v4M2275 1230h4M2284 1230h4" stroke-dasharray="4 1"/>
    </svg>
  </footer>
</section>

<div class="class-timer"><i></i><span>上课中 01:56:44</span><svg viewBox="0 0 16 10"><path d="M2 8l6-6 6 6" fill="none" stroke="#555" stroke-width="2"/></svg></div>
<div class="frame"></div>
<div class="watermark">一手：<span>666java.com</span></div>
<svg class="cursor" viewBox="0 0 18 27"><path d="M1 1v20l5-4 4 9 4-2-4-8h7z" fill="#fff" stroke="#111" stroke-width="1.500"/></svg>
<div class="ime"><svg viewBox="2298 1202 242 44">
  <path d="M2312 1209h224q2 0 2 2v31q0 2-2 2h-224z" fill="#fff"/>
  <path d="M2301 1211q0-3 3-3l26-4q4 0 4 4l5 30q0 4-4 5l-24 2q-5 0-6-4z" fill="#f0672a"/><path d="M2330 1213q-14-2-17 4t6 8 6 9-16 2" fill="none" stroke="#fff" stroke-width="6"/>
  <g fill="none" stroke="#1263c4" stroke-width="2.500"><path d="M2352 1222h17v9h-17zM2360.500 1216v22"/><path d="M2424 1232v5M2419 1237h10M2417 1226q0 7 7 7t7-7"/><rect x="2448" y="1219" width="18" height="15"/><path d="M2448 1224h18M2448 1229h18M2454 1219v15M2460 1219v15" stroke-width="1.500"/></g>
  <path d="M2421 1216h7v13h-7z" fill="#1263c4"/><circle cx="2387" cy="1223" r="2.500" fill="#1263c4"/><path d="M2394 1227h5v5l-4 4v-4h-1z" fill="#1263c4"/>
  <path d="M2484 1217q5 4 10 0l6 4-2 6-3-1v11h-12v-11l-3 1-2-6z" fill="#6b74ea"/>
  <g fill="#1263c4"><rect x="2512" y="1218" width="8" height="8" rx="3"/><rect x="2522" y="1218" width="8" height="8" rx="1"/><rect x="2512" y="1228" width="8" height="8" rx="1"/><rect x="2522" y="1228" width="8" height="8" rx="1"/></g>
</svg></div>

<footer class="taskbar">
  <svg class="win" viewBox="0 0 24 24"><path d="M0 4l10-1.500V11H0zM11.500 2.300L23 .5V11H11.500zM0 12.500h10V21L0 19.500zM11.500 12.500H23V23l-11.500-1.800z"/></svg>
  <div class="search"><svg viewBox="0 0 24 24" fill="none" stroke="#222" stroke-width="1.800"><circle cx="15" cy="9" r="7"/><path d="M10 14l-8 8"/></svg>在这里输入你要搜索的内容</div>
  <svg class="apps" viewBox="530 1387 660 53">
    <g fill="none" stroke="#222" stroke-width="2"><path d="M544 1408h13v11h-13zM544 1401v4h13v-4M544 1427v-4h13v4M563 1402v5M563 1415v12"/></g><path d="M561 1408h4v5h-4z"/>
    <path d="M786 1387h65v53h-65z" fill="#f3f7fa"/>
    <g fill="#1268cb"><path d="M596 1437h53v3h-53zM661 1437h44v3h-44zM727 1437h43v3h-43zM787 1437h64v3h-64zM858 1437h52v3h-52zM923 1437h53v3h-53zM1053 1437h53v3h-53zM1118 1437h54v3h-54z"/></g><path d="M706 1437h8v3h-8zM771 1437h8v3h-8z" fill="#6d9fdc"/>
    <path d="M608 1402h11l3 3h14v19h-28z" fill="#e6b02e"/><path d="M608 1407h28v17h-28z" fill="#fbd667"/><path d="M613 1425v-9h19v9h-5v-5h-8v5z" fill="#3b88d8"/>
    <rect x="672" y="1398" width="32" height="31" rx="4" fill="#fff"/><path d="M688 1400l10 9-10 9-10-9z" fill="#27a7ee"/><path d="M681 1413l7 6 7-6v3l-7 6-7-6z" fill="#6a62e0"/><path d="M672 1421q16 4 32 0v5q0 4-4 4h-24q-4 0-4-4z" fill="#5a6ad8"/><path d="M686 1405l5 4-5 4z" fill="#fff"/>
    <path d="M753 1400l15 13-15 12-15-12z" fill="#29aef0"/><path d="M743 1418l10 7 10-7v3l-10 9-10-9z" fill="#6a62e0"/><path d="M750 1408l8 5-8 5z" fill="#fff"/>
    <circle cx="820" cy="1414" r="15" fill="#e8704a"/><path d="M820 1399a15 15 0 0 1 15 15h-15z" fill="#f6a07c"/><path d="M820 1429a15 15 0 0 0 15-15h-15z" fill="#cc4f2a"/><rect x="803" y="1406" width="16" height="17" rx="1" fill="#bf3d1b"/><text x="806" y="1420" font-size="14" font-weight="700" fill="#fff">P</text>
    <circle cx="883.500" cy="1414" r="15" fill="#e04a3a"/><path d="M883.500 1414L870.500 1406.500A15 15 0 0 0 881 1428.800z" fill="#2da34c"/><path d="M883.500 1414l-2.500 14.800A15 15 0 0 0 897 1408h-13z" fill="#f7c52d"/><circle cx="883.500" cy="1414" r="7.500" fill="#fff"/><circle cx="883.500" cy="1414" r="6" fill="#3f7fe8"/>
    <path d="M957 1398l8 4v23l-8 4-14-12-6 5-3-2 7-6-7-6 3-2 6 5zM957 1406l-9 8 9 8z" fill="#1f83cf" fill-rule="evenodd"/><path d="M957 1398l8 4v23l-8 4z" fill="#38a4ec"/>
    <path d="M1003 1413q-3-16 11-16t11 16z" fill="#111"/><path d="M1004.500 1408q1-3 4-3h11q3 0 4 3v8q-2 9-9.500 11-7.500-2-9.500-11z" fill="#f0cfa2" stroke="#222"/><path d="M1000 1429q2-4 7-6l7 5 7-5q5 2 8 6z" fill="#111"/><path d="M1010 1425l4 4 4-4z" fill="#f0cfa2"/><path d="M1007 1410h5M1016 1410h5M1014 1412v5M1011 1421h6" stroke="#333" stroke-width="1.600"/>
    <rect x="1064" y="1398" width="32" height="31" rx="3" fill="#549a12"/><rect x="1129" y="1398" width="32" height="31" rx="3" fill="#ee6440"/><path d="M1090 1404h-11l-7 4v13l7 4h11l-4-5h-7v-11h7zM1155 1404h-11l-7 4v13l7 4h11l-4-5h-7v-11h7z" fill="#fff"/>
  </svg>
  <svg class="tray" viewBox="2260 1387 130 53" fill="none" stroke="#222" stroke-width="1.800"><path d="M2273 1418l7-7 7 7M2304 1416q0 6 7 6t7-6M2311 1422v5M2306 1427h10M2337 1405h17v13h-17zM2346 1418v5M2340 1423h12M2332 1403h6v6h-6M2366 1411h4l5-5v17l-5-5h-4zM2378 1410q3 4 0 8M2382 1407q5 7 0 14"/><rect x="2307" y="1402" width="8" height="15" rx="3" fill="#222"/></svg>
  <div class="clock"><span>10:51</span><span>2022/6/2</span></div>
  <svg class="note" viewBox="0 0 24 24"><path d="M1 2h22v16h-6l-7 5v-5H1z" fill="#111"/><path d="M5 6h14M5 10h14M5 14h9" stroke="#fff" stroke-width="1.500"/></svg>
</footer>
</main>
</body>
</html>
```
FILE: styles.css
```css
* { box-sizing: border-box; margin: 0; padding: 0; }
body { width: 2560px; height: 1440px; overflow: hidden; background: #2f3136; font: 16px/1 "Noto Sans CJK SC", sans-serif; }
ul { list-style: none; }
svg { flex: none; display: block; }
svg text { font-family: "Open Sans", "Noto Sans CJK SC", sans-serif; }
.defs { position: absolute; }
.desktop { position: relative; display: flex; flex-direction: column; width: 2560px; height: 1440px; overflow: hidden; }

/* editor window */
.vscode { display: flex; flex-direction: column; height: 1387px; border-left: 4px solid #f0370c; border-bottom: 2px solid #0e0e10; background: #27292b; color: #a7a9ae; font-family: "Open Sans", "Noto Sans CJK SC", sans-serif; }
.vs-title { display: flex; align-items: center; height: 57px; font-size: 20.700px; white-space: nowrap; }
.vs-logo { width: 32px; height: 32px; margin: 0 34px 0 13px; }
.vs-menu { display: flex; width: 1027px; font: 22px/1 "Noto Sans CJK SC", sans-serif; letter-spacing: -.2px; }
.vs-menu span { width: 110px; }
.vs-name-a { width: 262px; padding-top: 4px; }
.vs-name-b { width: 549px; display: flex; justify-content: flex-end; margin-right: 179px; padding-top: 4px; }
.vs-ctl { width: 460px; height: 57px; }
.vs-body { display: flex; flex: 1; min-height: 0; }
.activity { width: 88px; background: #393c44; }
.activity svg { width: 89px; height: 1287px; }
.side { width: 610px; display: flex; flex-direction: column; position: relative; }
.side svg { fill: none; stroke: #c8cacd; stroke-width: 2; }
.side h2 { height: 68px; padding: 21px 0 0 39px; font: 21.500px/24px "Noto Sans CJK SC", sans-serif; color: #c3c5c9; }
.root { height: 42px; display: flex; align-items: center; gap: 10px; padding-left: 9px; background: #34373d; color: #c9cbd0; font-size: 20px; }
.root svg { width: 20px; height: 12px; }
.tree li { display: flex; align-items: center; height: 42px; padding-left: 38px; gap: 15px; }
.tree li > svg:first-child { width: 12px; height: 20px; }
.tree .open { padding-left: 34px; gap: 11px; }
.tree .open > svg:first-child { width: 20px; height: 12px; }
.tree .fold { width: 32px; height: 26px; stroke: none; }
.files { background: linear-gradient(#6a6c70, #6a6c70) 39px 0 / 1px 100% no-repeat; }
.files li { height: 42.400px; display: flex; align-items: center; padding-left: 81px; }
.files .sel { background: #3c404a80; }
.files svg { width: 26px; height: 20px; stroke: none; }
.panels { margin-top: auto; height: 84px; background: #393c45; color: #d5d6d9; }
.panels div { height: 42px; display: flex; align-items: center; gap: 15px; padding: 0 0 2px 13px; font: 21px/1 "Noto Sans CJK SC", sans-serif; }
.panels svg { width: 12px; height: 20px; }
.editor { flex: 1; display: flex; flex-direction: column; background: #2f3136; }
.ed-tabs { height: 68px; background: #27292b; display: flex; justify-content: flex-end; align-items: center; padding-right: 28px; }
.ed-tabs svg { width: 80px; height: 26px; }
.crumb { height: 42px; }
.ed-body { flex: 1; display: flex; justify-content: space-between; }
.code-col { flex: 1; border-top: 2px solid #232528; display: flex; flex-direction: column; justify-content: space-between; }
.hl { height: 35px; margin-top: 544px; background: #32363e; }
.line { display: flex; padding: 0 0 65px 55px; font: 25.600px/26px "DejaVu Sans Mono", monospace; color: #b4b8c0; }
.no { width: 82px; color: #6e727a; }
.src i { font-style: normal; color: #e37a6c; }
.minimap { width: 174px; height: 1177px; }
.vs-status { height: 41px; display: flex; align-items: center; font-size: 20.500px; white-space: nowrap; background: #262829; padding-top: 2px; }
.probs { width: 80px; height: 40px; margin-left: 23px; margin-right: -44px; margin-top: -2px; }
.n1 { width: 18px; } .n2 { width: 1652px; padding-left: 7px; } .warn { width: 26px; height: 26px; margin-top: -2px; }
.s-pos { width: 149px; } .s-sp { width: 101px; } .s-utf { width: 91px; } .s-crlf { width: 82px; } .s-html { width: 91px; } .s-port { width: 138px; }
.s-utf, .s-crlf, .s-html { font-size: 21.300px; }
.s-pos, .s-sp { font-size: 21.500px; }
.ban { width: 26px; height: 26px; margin-right: 6px; }
.fb { width: 90px; height: 32px; }

/* presentation window */
.ppt { position: absolute; left: 196px; top: 38px; width: 2118px; height: 1209px; border: 1px solid #8f4220; border-bottom-width: 2px; background: #e7e7e7; display: flex; flex-direction: column; box-shadow: 0 2px 9px #0009; font-size: 16px; color: #333; }
.p-title { height: 46px; background: #b1582f; color: #fff; display: flex; align-items: center; }
.qat { width: 200px; height: 30px; margin-left: 23px; margin-top: 2px; }
.p-name { width: 1125px; text-align: center; margin: 0 178px 0 272px; font: 16.600px/1 "Open Sans", "Noto Sans CJK SC", sans-serif; white-space: nowrap; }
.login { width: 61px; height: 25px; background: #fff; color: #b1582f; text-align: center; line-height: 25px; margin: -2px 0 0 -3px; }
.p-ctl { width: 220px; height: 40px; margin: -1px 0 0 27px; }
.p-tabs { height: 40px; background: #b1582f; color: #fff; display: flex; align-items: center; font-weight: 500; line-height: 38px; }
.p-tabs span { padding: 0 18px 2px; }
.p-tabs .file { padding: 0 27px 2px 23px; }
.p-tabs .on { background: #f4f4f4; color: #b1582f; height: 40px; padding: 0 17px 0 16px; }
.p-tabs em { font-style: normal; padding-bottom: 4px; }
.bulb { width: 18px; height: 24px; margin: 0 16px 0 20px; }
.person { width: 22px; height: 24px; margin: 0 3px 0 auto; }
.p-tabs em:last-child { margin-right: 33px; }
.ribbon { height: 126px; background: #f4f4f4; border-bottom: 2px solid #d0d0d0; display: flex; padding-top: 5px; }
.grp { height: 116px; border-right: 1px solid #b9b9b9; display: flex; flex-direction: column; color: #222; }
.grp footer { margin-top: auto; height: 22px; text-align: center; line-height: 20px; display: grid; grid-template-columns: 1fr auto 1fr; justify-items: end; align-items: center; padding-bottom: 1px; }
.grp footer::before { content: ""; }
.grp .wl { padding-right: 22px; }
.la { width: 12px; height: 12px; margin: 6px -18px 0 0; color: #666; }
.body { display: flex; height: 92px; }
.dim { color: #a3a3a3 !important; }
.cv { width: 8px !important; height: 6px !important; margin-left: 8px; color: #555; }
.dim .cv { color: #a3a3a3; }
.col { display: flex; flex-direction: column; margin-top: -1px; }
.col p { height: 30.500px; display: flex; align-items: center; white-space: nowrap; }
.col p > svg:first-child { width: 22px; height: 22px; margin-right: 3px; }
.col p > .rep:first-child { height: 26px; overflow: visible; }
.col .far { margin-left: 15px; } .col .mid { margin-left: 15px; }
.big { display: flex; flex-direction: column; align-items: center; text-align: center; line-height: 20px; padding-top: 4px; }
.big > svg:first-child { width: 40px; height: 42px; margin-bottom: 2px; }
.big .cv { display: inline-block; margin-left: 2px; }
.big > .cv { margin: 6px 0 0; }
.g-clip { width: 170px; } .g-clip .big { width: 56px; margin: 0 4px 0 11px; }
.g-slide { width: 179px; } .g-slide .big { width: 72px; margin: 0 4px 0 8px; padding-right: 3px; white-space: nowrap; }
.g-slide .col { margin-left: 2px; }
.g-font { width: 393px; } .tools { height: 94px; margin-top: -4px; } .g-font .tools { width: 392px; }
.g-para { width: 432px; } .g-para .tools { width: 245px; margin-right: 4px; }
.g-draw { width: 456px; } .gal { width: 184px; height: 82px; margin: 4px 0 0 12px; }
.g-draw .big { width: 66px; padding-right: 3px; } .g-draw .q { padding-right: 9px; } .g-draw .q > * { white-space: nowrap; } .g-draw .col { margin-left: 1px; }
.g-draw .big > svg:first-child { margin-left: 3px; }
.g-edit { width: 113px; } .g-edit .col { margin-left: 14px; }
.collapse { width: 16px; height: 10px; margin: 107px 12px 0 auto; }

.p-main { display: flex; height: 965px; }
.nav { width: 335px; display: flex; border-right: 2px solid #bdbdbd; overflow: hidden; }
.nav .bar { width: 20px; height: 965px; }
.list { width: 308px; height: 965px; overflow: hidden; }
.list h3 { font: 16.400px/20px "Open Sans", "Noto Sans CJK SC", sans-serif; height: 59px; padding: 23px 0 0 21px; display: flex; gap: 10px; color: #333; }
.list h3 i { width: 9px; height: 9px; background: #666; clip-path: polygon(100% 0, 100% 100%, 0 100%); margin-top: 8px; }
.list h3 ~ h3 { height: 36px; padding-top: 0; }
.th { height: 156px; display: flex; }
.num { width: 30px; margin-right: 21px; text-align: right; font: 20px/14px "Open Sans", sans-serif; color: #444; margin-top: -2px; }
.num svg { width: 16px; height: 14px; margin: 9px 0 0 14px; }
.pic { width: 228px; height: 129px; background: #fff; outline: 1px solid #b9b9b9; margin-left: -1px; }
.cur .num { color: #c0502a; }
.cur .pic { outline: 5px solid #b1502a; }
.tt { font-size: 8.600px; font-weight: 700; fill: #333; }
.tb { font-size: 58px; font-weight: 700; fill: #333; }
.tx { font-size: 3.800px; fill: #333; }
.mono { font-size: 3.600px; fill: #99a; } .mono.dk { fill: #445; }
.mc { text-anchor: middle; }
.h { fill: #f3eeeb; stroke: #c9a89c; stroke-width: .4; } .r { fill: #e0d6d1; stroke: #c9a89c; stroke-width: .4; }
.mt .h, .mt .r { stroke-width: 3; }
.mt text { font-size: 20px; text-anchor: middle; fill: #333; } .mt .b { font-weight: 700; }
.arc { fill: none; stroke: #e6a938; stroke-width: 1.200; }
.stage { flex: 1; display: flex; flex-direction: column; }
.canvas { height: 918px; border-bottom: 2px solid #c6c6c6; display: flex; justify-content: space-between; padding-right: 2px; }
.canvas .bar { width: 20px; height: 917px; }
.slide { position: relative; width: 1548px; height: 873px; margin: 21px 0 0 106px; background: #fff; outline: 1px solid #c2c2c2; overflow: hidden; }
.art { position: absolute; left: 0; top: 0; width: 1548px; height: 872px; }
.brand { position: absolute; left: 29px; top: 71px; width: 100px; text-align: center; color: #fff; font: 700 17px/20px "Open Sans", sans-serif; }
.slide h1 { position: absolute; left: 168px; top: 39px; font: 700 58.700px/72px "Noto Sans CJK SC", sans-serif; color: #404040; letter-spacing: -.6px; white-space: nowrap; }
.t { position: absolute; width: 418px; border-collapse: collapse; table-layout: fixed; text-align: center; font: 20.300px/26px "Open Sans", "Noto Sans CJK SC", sans-serif; color: #1c1a19; }
.t th, .t td { border: 2px solid #ab7565; overflow: visible; }
.t td { padding-bottom: 2px; }
.t th { font-weight: 600; font-size: 21.700px; background: #f1edea; color: #0c0c0c; }
.t tr:nth-child(even) td { background: #e2dad3; }
.t tr:nth-child(odd) td { background: #f1edea; }
.t .cj { font: 22px/26px "Noto Sans CJK SC", sans-serif; }
.t .q { font-size: 15px; padding-bottom: 12px; letter-spacing: 1px; }
.t u { text-decoration: underline wavy #d04040 1px; text-underline-offset: 2px; }
.t1 { left: 206px; top: 165px; } .t1 tr { height: 42px; } .t1 tr:first-child { height: 66px; } .t1 th { font-size: 21px; }
.t2 { left: 206px; top: 391.500px; } .t2 tr { height: 38.700px; } .t2 td { padding-top: 2px; } .t2 tr:first-child { height: 51px; } .t2 th, .t3 th { padding-bottom: 10px; }
.t3 { left: 206px; top: 638.500px; } .t3 tr { height: 38.600px; } .t3 td { padding-bottom: 0; } .t3 tr:first-child { height: 51px; }
.t4 { left: 843px; top: 164px; } .t4 tr { height: 48px; } .t4 td, .t5 td { padding-bottom: 7px; } .t4 tr:first-child { height: 66px; } .t4 .cj { padding-bottom: 10px; }
.t5 { left: 974px; top: 461px; } .t5 tr { height: 48px; } .t5 th { padding-bottom: 8px; } .t5 tr:first-child { height: 49px; }
.notes { padding: 9px 0 0 15px; font-size: 19.700px; line-height: 22px; color: #555; }
.p-status { flex: 1; border-top: 1px solid #c8c8c8; background: #f4f4f4; display: flex; align-items: center; color: #333; white-space: nowrap; }
.p-status > span { padding-bottom: 2px; }
.p-status .a { width: 208px; padding-left: 11px; margin-right: 11px; letter-spacing: .35px; }
.book { width: 20px; height: 18px; margin-right: 21px; }
.p-status .b { width: 95px; } .acc { width: 22px; height: 20px; margin-right: 2px; }
.p-status .c { width: 1078px; font-weight: 500; letter-spacing: .2px; }
.ni { width: 16px; height: 18px; margin-right: 5px; } .ci { width: 19px; height: 18px; margin: 0 4px 0 27px; }
.views { width: 480px; height: 28px; margin-left: 26px; }

/* floating items */
.class-timer { position: absolute; left: 1172px; top: 0; width: 213px; height: 45px; background: #fff; border: 1px solid #bbb; display: flex; align-items: center; padding: 2px 0 0 27px; gap: 6px; color: #222; font-size: 16.300px; white-space: nowrap; }
.class-timer i { width: 9px; height: 9px; border-radius: 50%; background: #17b387; }
.class-timer span { width: 122px; }
.class-timer svg { width: 16px; height: 10px; margin-left: 11px; }
.frame { position: absolute; left: 1811px; top: -3px; width: 643px; height: 9px; border: 2px solid #f3f3f3; background: #111; }
.watermark { position: absolute; left: 2116px; top: 393px; font: 300 53px/60px "Noto Sans CJK SC", serif; color: #b01d0a; white-space: nowrap; display: flex; }
.watermark span { font-family: "Liberation Serif", serif; margin-left: 8px; font-weight: 400; font-size: 53.500px; }
.cursor { position: absolute; left: 599px; top: 654px; width: 18px; height: 27px; }
.ime { position: absolute; left: 2298px; top: 1202px; width: 242px; height: 44px; }

/* taskbar */
.taskbar { height: 53px; display: flex; align-items: center; background: linear-gradient(90deg, #cfe3ed, #d6e4ec 60%, #d9dfea); color: #222; white-space: nowrap; }
.win { width: 24px; height: 24px; margin: 0 21px 0 20px; }
.search { width: 457px; height: 51px; background: #fff; border: 1px solid #c9d2d8; display: flex; align-items: center; gap: 13px; padding-left: 14px; font-size: 18.700px; margin-right: 8px; }
.search svg { width: 24px; height: 24px; }
.apps { width: 660px; height: 53px; margin-right: 1070px; }
.tray { width: 130px; height: 53px; }
.clock { width: 102px; display: flex; flex-direction: column; align-items: center; gap: 8px; font: 16.500px/17px "Open Sans", sans-serif; }
.note { width: 24px; height: 24px; margin-left: 13px; }
```
